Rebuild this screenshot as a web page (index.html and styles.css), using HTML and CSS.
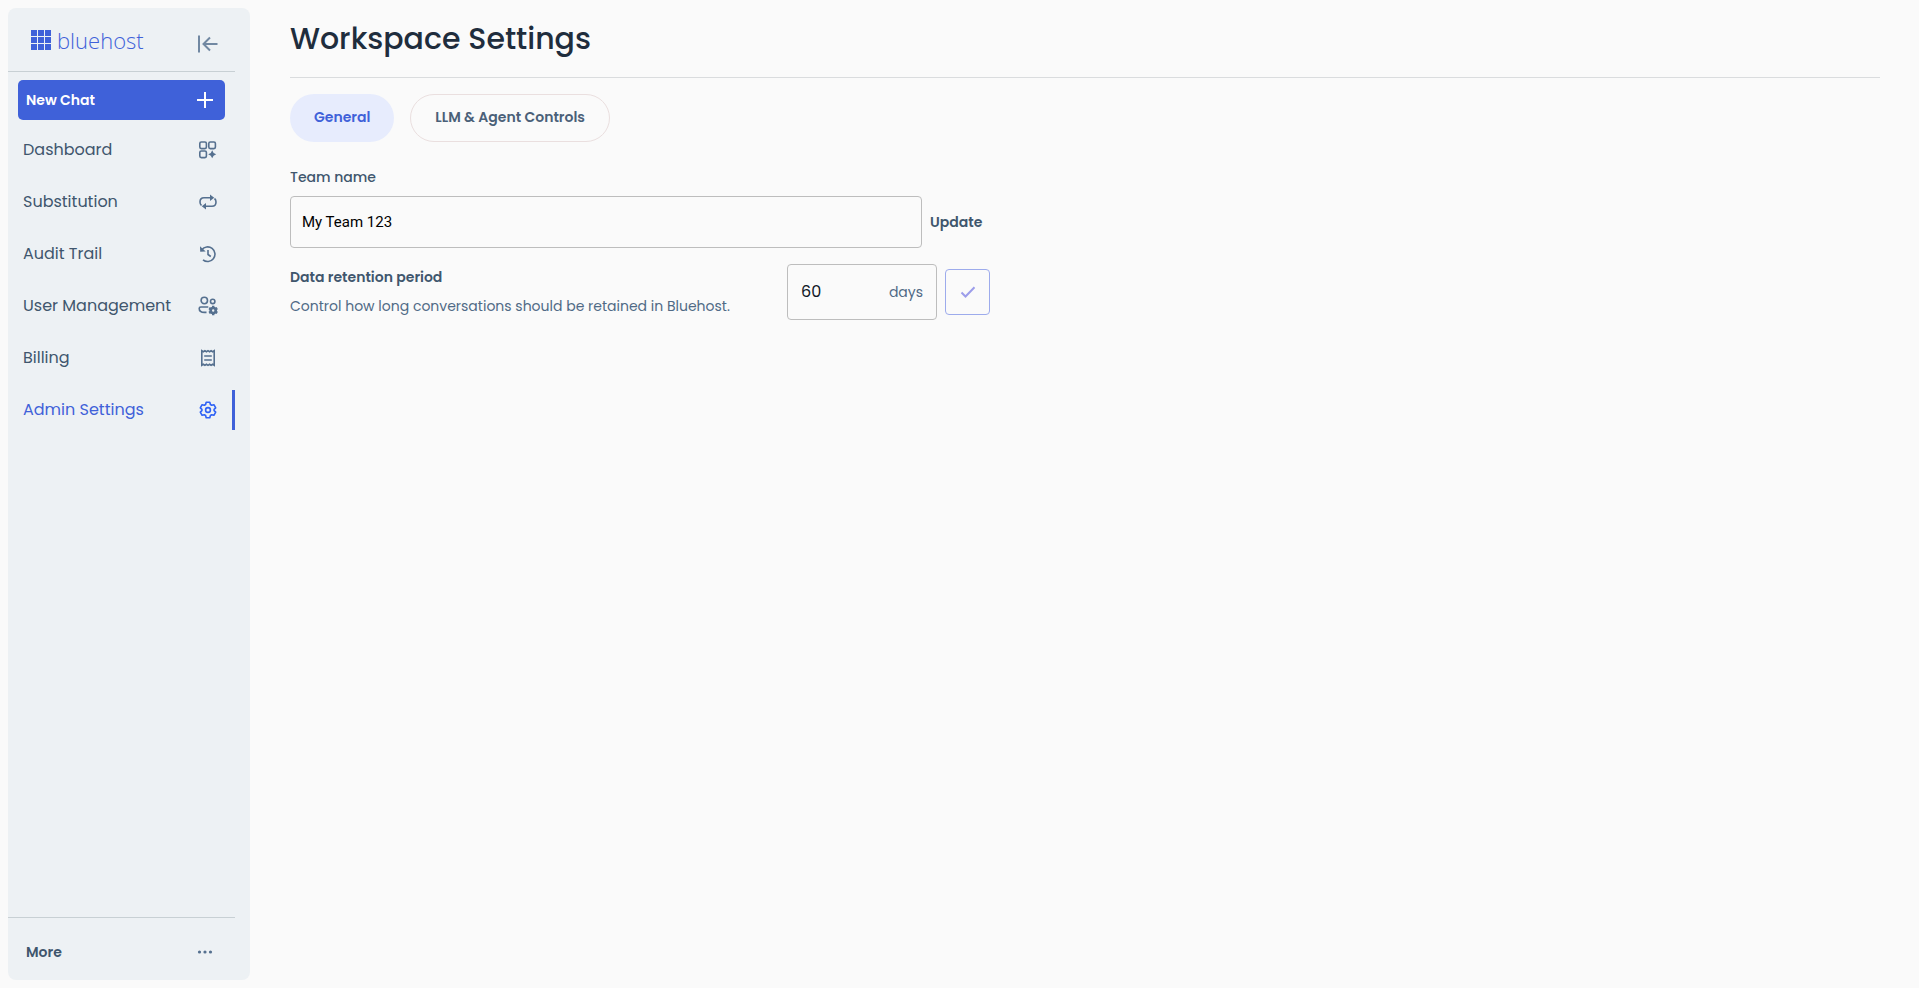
FILE: index.html
```html
<!DOCTYPE html>
<html lang="en">
<head>
<meta charset="utf-8">
<meta name="viewport" content="width=device-width, initial-scale=1">
<title>Workspace Settings</title>
<link rel="stylesheet" href="styles.css">
</head>
<body>
<div class="app">
  <aside class="sidebar">
    <header class="sidebar-head">
      <a class="logo" href="#">
        <svg class="logo-mark" viewBox="0 0 20 20" aria-hidden="true">
          <path d="M0 0h6v6H0zM7 0h6v6H7zM14 0h6v6h-6zM0 7h6v6H0zM7 7h6v6H7zM14 7h6v6h-6zM0 14h6v6H0zM7 14h6v6H7zM14 14h6v6h-6z"/>
        </svg>
        <span>bluehost</span>
      </a>
      <button class="icon-button" type="button" aria-label="Collapse sidebar">
        <svg class="icon-collapse" viewBox="0 0 20 18" aria-hidden="true">
          <path d="M1 0.500v17M19.500 9H6M12 2.500L5.500 9l6.500 6.500"/>
        </svg>
      </button>
    </header>

    <nav class="nav" aria-label="Main">
      <button class="new-chat" type="button">
        <span>New Chat</span>
        <svg class="icon-plus" viewBox="0 0 16 16" aria-hidden="true"><path d="M8 0v16M0 8h16"/></svg>
      </button>
      <a class="nav-item" href="#">
        <span>Dashboard</span>
        <svg class="icon" viewBox="0 0 20 20" aria-hidden="true">
          <rect x="1.800" y="2" width="6.600" height="6.600" rx="1.500"/>
          <rect x="10.800" y="2" width="6.600" height="6.600" rx="1.500"/>
          <rect x="1.800" y="11" width="6.600" height="6.600" rx="1.500"/>
          <path class="solid" d="M14.200 10.300l1.400 2.600 2.600 1.400-2.600 1.400-1.400 2.600-1.400-2.600-2.600-1.400 2.600-1.400z"/>
        </svg>
      </a>
      <a class="nav-item" href="#">
        <span>Substitution</span>
        <svg class="icon" viewBox="0 0 20 20" aria-hidden="true">
          <path d="M3.500 13.500C2.300 12.600 2 11.300 2 10c0-2.700 1.700-4.300 4-4.300h7M16.500 6.500c1.200.9 1.500 2.200 1.500 3.500 0 2.700-1.700 4.300-4 4.300H7"/>
          <path class="solid" d="M12 2.500l4.200 3.200L12 9zM8 11l-4.200 3.300L8 17.500z"/>
        </svg>
      </a>
      <a class="nav-item" href="#">
        <span>Audit Trail</span>
        <svg class="icon" viewBox="0 0 20 20" aria-hidden="true">
          <path d="M3.800 5.800A7.300 7.300 0 1 1 5 15.800M10 6v4.500l2.800 2"/>
          <path class="solid" d="M2 2.300l.2 5.500 5.500-.3z"/>
        </svg>
      </a>
      <a class="nav-item" href="#">
        <span>User Management</span>
        <svg class="icon" viewBox="0 0 20 20" aria-hidden="true">
          <circle cx="6.300" cy="4.500" r="3.200"/>
          <circle cx="14.700" cy="5.400" r="2.200"/>
          <path d="M10.300 11H2.800c-1 0-1.600.6-1.600 1.500 0 2.600 2.300 3.900 5.300 3.900h2"/>
          <circle class="cog-small" cx="15.200" cy="14.500" r="2.500"/>
          <path class="cog-teeth" d="M15.200 9.800v2M15.200 17.200v2M11.100 12.100l1.700 1M17.600 15.900l1.700 1M11.100 16.900l1.700-1M17.600 13.100l1.700-1"/>
        </svg>
      </a>
      <a class="nav-item" href="#">
        <span>Billing</span>
        <svg class="icon" viewBox="0 0 20 20" aria-hidden="true">
          <path d="M3.800 2.700l1.500 1 1.600-1 1.600 1 1.500-1 1.500 1 1.600-1 1.600 1 1.500-1v14.600l-1.500-1-1.600 1-1.600-1-1.500 1-1.500-1-1.600 1-1.600-1-1.500 1zM6.200 8h7.600M6.200 12h7.600"/>
        </svg>
      </a>
      <a class="nav-item nav-item-active" href="#" aria-current="page">
        <span>Admin Settings</span>
        <svg class="icon" viewBox="0 0 20 20" aria-hidden="true">
          <path stroke-linejoin="round" d="M8.200 2.300h3.600l.6 2.200 1.300.8 2.200-.6 1.800 3.100-1.600 1.500v1.400l1.600 1.500-1.800 3.100-2.200-.6-1.300.8-.6 2.200H8.200l-.6-2.200-1.300-.8-2.200.6-1.800-3.100 1.600-1.500V9.300L2.300 7.800l1.800-3.100 2.200.6 1.300-.8z"/>
          <circle cx="10" cy="10" r="2.400"/>
        </svg>
      </a>
    </nav>

    <footer class="sidebar-foot">
      <button class="more" type="button">
        <span>More</span>
        <svg class="icon-more" viewBox="0 0 16 4" aria-hidden="true">
          <circle cx="2.500" cy="2" r="1.600"/><circle cx="8" cy="2" r="1.600"/><circle cx="13.500" cy="2" r="1.600"/>
        </svg>
      </button>
    </footer>
  </aside>

  <main class="main">
    <h1 class="title">Workspace Settings</h1>
    <div class="tabs" role="tablist">
      <button class="tab tab-active" type="button" role="tab" aria-selected="true">General</button>
      <button class="tab" type="button" role="tab" aria-selected="false">LLM &amp; Agent Controls</button>
    </div>
    <form class="settings">
      <div class="field">
        <label class="field-label" for="team-name">Team name</label>
        <div class="field-row">
          <input class="team-input" id="team-name" type="text" value="My Team 123">
          <button class="update" type="button">Update</button>
        </div>
      </div>
      <div class="retention">
        <div class="retention-text">
          <label class="retention-title" for="days">Data retention period</label>
          <p class="retention-note">Control how long conversations should be retained in Bluehost.</p>
        </div>
        <div class="days-box">
          <input class="days-input" id="days" type="text" inputmode="numeric" value="60">
          <span class="days-unit">days</span>
        </div>
        <button class="confirm" type="button" aria-label="Save retention period">
          <svg class="icon-check" viewBox="0 0 16 12" aria-hidden="true"><path d="M1.500 6.500l4 4L14.500 1.200"/></svg>
        </button>
      </div>
    </form>
  </main>
</div>
</body>
</html>
```
FILE: styles.css
```css
* {
  box-sizing: border-box;
}

body {
  margin: 0;
  background: #fafafa;
  color: #40566d;
  font-family: Poppins, Inter, sans-serif;
  font-size: 14px;
  line-height: 20px;
}

button,
input {
  margin: 0;
  padding: 0;
  border: 0;
  background: none;
  color: inherit;
  font: inherit;
}

button {
  cursor: pointer;
}

a {
  color: inherit;
  text-decoration: none;
}

svg {
  flex: none;
  fill: none;
  stroke: currentColor;
}

.app {
  display: flex;
  gap: 40px;
  min-height: 100vh;
  padding: 8px 39px 8px 8px;
}

.sidebar {
  display: flex;
  flex: none;
  flex-direction: column;
  width: 242px;
  padding-right: 15px;
  border-radius: 8px;
  background: #edf1f4;
}

.sidebar-head {
  display: flex;
  align-items: center;
  justify-content: space-between;
  height: 64px;
  padding: 0 17px 0 23px;
  border-bottom: 1px solid #c8d0d4;
}

.logo {
  display: flex;
  align-items: center;
  gap: 6px;
  color: #3f61d9;
  font-family: "Open Sans", sans-serif;
  font-size: 22px;
  font-weight: 300;
  line-height: 28px;
}

.logo-mark {
  width: 20px;
  height: 20px;
  fill: currentColor;
  stroke: none;
}

.icon-button {
  display: flex;
  padding-top: 8px;
  color: #7188a2;
}

.icon-collapse {
  width: 20px;
  height: 18px;
  stroke-width: 2;
}

.nav {
  display: flex;
  flex: 1;
  flex-direction: column;
  gap: 12px;
  padding-top: 8px;
}

.new-chat {
  display: flex;
  align-items: center;
  justify-content: space-between;
  height: 40px;
  margin: 0 10px -2px;
  padding: 0 12px 0 8px;
  border-radius: 5px;
  background: #3f61d9;
  color: #fff;
  font-weight: 600;
}

.icon-plus {
  width: 16px;
  height: 16px;
  stroke-width: 2;
}

.nav-item {
  display: flex;
  align-items: center;
  justify-content: space-between;
  height: 40px;
  padding: 0 14px 0 15px;
  border-right: 3px solid transparent;
  font-size: 16px;
  line-height: 24px;
}

.nav-item-active {
  border-color: #3f61d9;
  color: #3f61d9;
}

.icon {
  width: 20px;
  height: 20px;
  overflow: visible;
  color: #55708f;
  stroke-width: 1.6;
}

.nav-item-active .icon {
  color: #2f62f5;
}

.solid {
  fill: currentColor;
  stroke: none;
}

.cog-small {
  stroke-width: 2.6;
}

.cog-teeth {
  stroke-width: 2.4;
}

.sidebar-foot {
  padding: 14px 22px 8px 18px;
  border-top: 1px solid #c8d0d4;
}

.more {
  display: flex;
  align-items: center;
  justify-content: space-between;
  width: 100%;
  height: 40px;
  font-weight: 600;
}

.icon-more {
  width: 16px;
  height: 4px;
  color: #55708f;
  fill: currentColor;
  stroke: none;
}

.main {
  flex: 1;
  min-width: 0;
}

.title {
  margin: 0 0 16px;
  padding: 9px 0 16px;
  border-bottom: 1px solid #dadcde;
  color: #1f2d3d;
  font-size: 30px;
  font-weight: 500;
  line-height: 44px;
}

.tabs {
  display: flex;
  gap: 16px;
  margin-bottom: 24px;
}

.tab {
  height: 48px;
  padding: 0 24px 2px;
  border: 1px solid #eadfdf;
  border-radius: 24px;
  color: #4a6078;
  font-weight: 600;
}

.tab-active {
  border: 0;
  background: #e7ecfd;
  color: #3f61d9;
}

.settings {
  display: flex;
  flex-direction: column;
  gap: 16px;
  max-width: 700px;
}

.field {
  display: flex;
  flex-direction: column;
  gap: 8px;
}

.field-label {
  line-height: 22px;
  font-weight: 500;
}

.field-row {
  display: flex;
  align-items: center;
  gap: 8px;
}

.team-input {
  flex: 1;
  min-width: 0;
  height: 52px;
  padding: 0 11px;
  border: 1px solid #bdbdbd;
  border-radius: 4px;
  color: #000;
  font-family: Roboto, sans-serif;
  font-size: 15px;
}

.update {
  width: 60px;
  text-align: left;
  font-weight: 600;
}

.retention {
  display: flex;
  align-items: center;
  gap: 8px;
}

.retention-text {
  display: flex;
  flex: 1;
  flex-direction: column;
  gap: 9px;
  padding-bottom: 2px;
}

.retention-title {
  font-weight: 600;
}

.retention-note {
  margin: 0;
  color: #506a86;
}

.days-box {
  display: flex;
  align-items: center;
  width: 150px;
  height: 56px;
  padding: 0 13px;
  border: 1px solid #bdbdbd;
  border-radius: 4px;
}

.days-input {
  flex: 1;
  min-width: 0;
  color: #111827;
  font-size: 16px;
}

.days-unit {
  color: #506a86;
}

.confirm {
  display: flex;
  align-items: center;
  justify-content: center;
  width: 45px;
  height: 46px;
  border: 1px solid #9dabec;
  border-radius: 4px;
  color: #9c9dea;
}

.icon-check {
  width: 16px;
  height: 12px;
  stroke-width: 2;
}
```
